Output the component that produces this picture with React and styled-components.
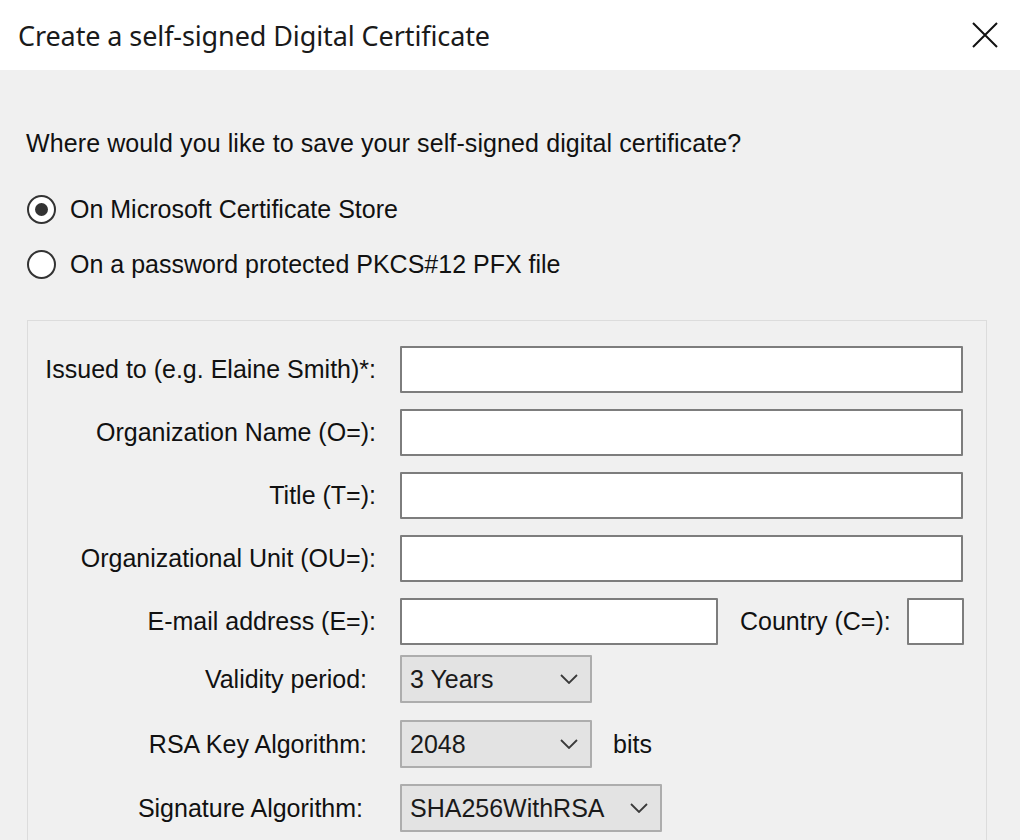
import styled, {createGlobalStyle} from 'styled-components'

const GlobalStyle = createGlobalStyle`
  html, body {
    margin: 0;
    padding: 0;
    background: #f0f0f0;
  }
  * {
    box-sizing: border-box;
  }
`

const FIELDS = [
    'Issued to (e.g. Elaine Smith)*:',
    'Organization Name (O=):',
    'Title (T=):',
    'Organizational Unit (OU=):',
]

const CloseIcon = () => (
    <svg width="26" height="26" viewBox="0 0 26 26">
        <path d="M1 1 L25 25 M25 1 L1 25" stroke="#111" strokeWidth="2" fill="none"/>
    </svg>
)

const Chevron = () => (
    <svg width="18" height="10" viewBox="0 0 18 10">
        <path d="M1 1 L9 9 L17 1" stroke="#3a3a3a" strokeWidth="1.8" fill="none"/>
    </svg>
)

const Combo = ({value, width}) => (
    <ComboBox width={width}>
        <span>{value}</span>
        <Chevron/>
    </ComboBox>
)

const App = () => {
    return (
        <Window>
            <GlobalStyle/>
            <TitleBar>
                <Title>Create a self-signed Digital Certificate</Title>
                <CloseButton><CloseIcon/></CloseButton>
            </TitleBar>
            <Body>
                <Question>Where would you like to save your self-signed digital certificate?</Question>
                <RadioList>
                    <RadioRow>
                        <Radio checked/>
                        <span>On Microsoft Certificate Store</span>
                    </RadioRow>
                    <RadioRow>
                        <Radio/>
                        <span>On a password protected PKCS#12 PFX file</span>
                    </RadioRow>
                </RadioList>
                <GroupBox>
                    {FIELDS.map(label =>
                        <Row key={label}>
                            <Label>{label}</Label>
                            <Input/>
                        </Row>
                    )}
                    <Row>
                        <Label>E-mail address (E=):</Label>
                        <Input width={318}/>
                        <InlineLabel gap={22} after={16}>Country (C=):</InlineLabel>
                        <Input width={57}/>
                    </Row>
                    <Row offset={-6}>
                        <Label inset={9}>Validity period:</Label>
                        <Combo value="3 Years" width={192}/>
                    </Row>
                    <Row offset={1}>
                        <Label inset={9}>RSA Key Algorithm:</Label>
                        <Combo value="2048" width={192}/>
                        <InlineLabel gap={21}>bits</InlineLabel>
                    </Row>
                    <Row>
                        <Label inset={13}>Signature Algorithm:</Label>
                        <Combo value="SHA256WithRSA" width={262}/>
                    </Row>
                </GroupBox>
            </Body>
        </Window>
    )
}

export default App


const Window = styled.div`
  width: 1020px;
  height: 840px;
  overflow: hidden;
  background: #f0f0f0;
  font-family: "Liberation Sans", Arial, sans-serif;
  font-size: 25px;
  color: #111;
`

const TitleBar = styled.div`
  height: 70px;
  background: #fff;
  display: flex;
  align-items: center;
  justify-content: space-between;
  padding: 0 22px 0 18px;
`

const Title = styled.div`
  font-family: "Noto Sans", "Open Sans", sans-serif;
  font-size: 27px;
  letter-spacing: -0.1px;
  color: #1a1a1a;
`

const CloseButton = styled.div`
  display: flex;
  align-items: center;
`

const Body = styled.div`
  padding: 58px 33px 0 26px;
`

const Question = styled.div`
  line-height: 30px;
  letter-spacing: 0.1px;
`

const RadioList = styled.div`
  display: flex;
  flex-direction: column;
  gap: 25px;
  margin-top: 36px;
`

const RadioRow = styled.div`
  display: flex;
  align-items: center;
  gap: 14px;
  height: 30px;
  line-height: 30px;
`

const Radio = styled.span`
  width: 29px;
  height: 29px;
  margin-left: 1px;
  border-radius: 50%;
  border: 2px solid #333;
  background: #fff;
  display: flex;
  align-items: center;
  justify-content: center;
  flex-shrink: 0;

  &::after {
    content: '';
    width: 13px;
    height: 13px;
    border-radius: 50%;
    background: ${props => props.checked ? '#333' : 'transparent'};
  }
`

const GroupBox = styled.div`
  margin: 41px 0 0 1px;
  border: 1px solid #dcdcdc;
  border-bottom: none;
  padding: 25px 23px 40px 0;
  display: flex;
  flex-direction: column;
  gap: 16px;
`

const Row = styled.div`
  display: flex;
  align-items: center;
  margin-top: ${props => props.offset || 0}px;
`

const Label = styled.div`
  width: 348px;
  flex-shrink: 0;
  text-align: right;
  padding-right: ${props => props.inset || 0}px;
  margin-right: 24px;
  white-space: nowrap;
`

const InlineLabel = styled.div`
  margin: 0 ${props => props.after || 0}px 0 ${props => props.gap}px;
  white-space: nowrap;
`

const Input = styled.div`
  height: 47px;
  flex: ${props => props.width ? `0 0 ${props.width}px` : '1'};
  background: #fff;
  border: 2px solid #7d7d7d;
  border-radius: 1px;
`

const ComboBox = styled.div`
  width: ${props => props.width}px;
  height: 48px;
  background: #e3e3e3;
  border: 2px solid #adadad;
  border-radius: 1px;
  display: flex;
  align-items: center;
  justify-content: space-between;
  padding: 0 12px 0 8px;
  color: #1a1a1a;
`
